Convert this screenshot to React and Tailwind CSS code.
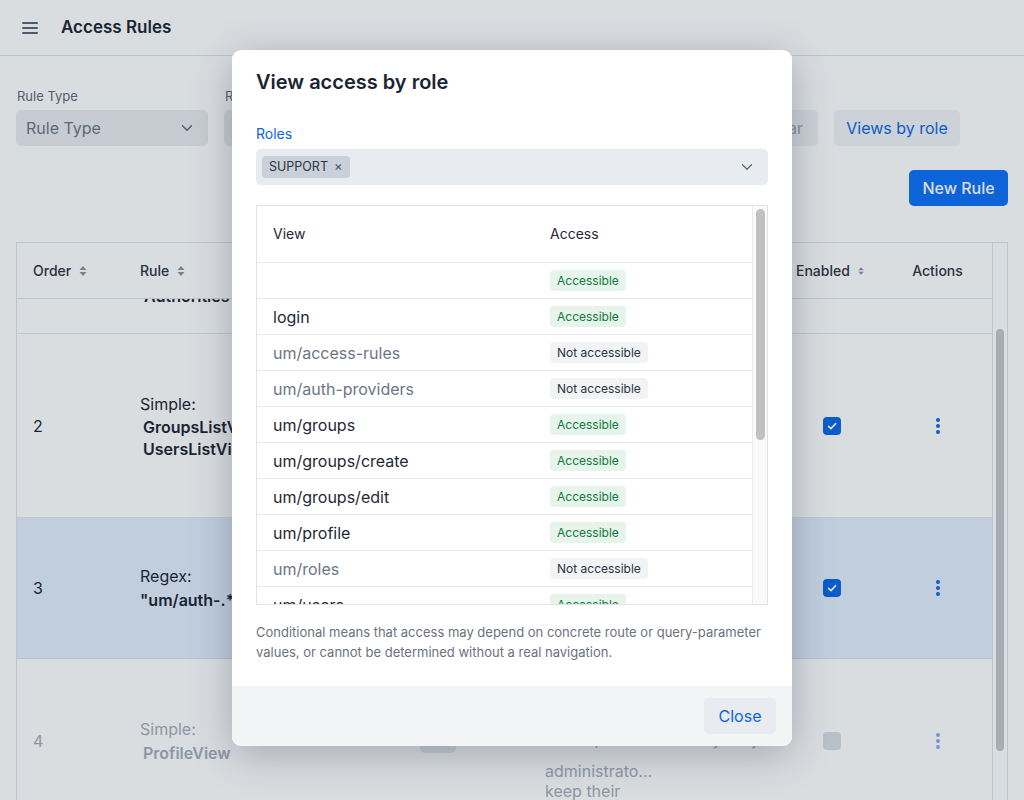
import { ChevronDown } from "lucide-react";

const views = [
  { path: "", ok: true },
  { path: "login", ok: true },
  { path: "um/access-rules", ok: false },
  { path: "um/auth-providers", ok: false },
  { path: "um/groups", ok: true },
  { path: "um/groups/create", ok: true },
  { path: "um/groups/edit", ok: true },
  { path: "um/profile", ok: true },
  { path: "um/roles", ok: false },
  { path: "um/users", ok: true },
  { path: "um/users/create", ok: true },
];

function SortIcon() {
  return (
    <svg width="8" height="12" viewBox="0 0 8 12" className="ml-2 text-[#8a94a4]">
      <path d="M4 1 L7.5 5 H0.5 Z" fill="currentColor" />
      <path d="M4 11 L7.5 7 H0.5 Z" fill="currentColor" />
    </svg>
  );
}

function Kebab({ faded }) {
  return (
    <div className={faded ? "flex flex-col gap-[2px] text-[#86acef]" : "flex flex-col gap-[2px] text-[#0c66e4]"}>
      <span className="w-1 h-1 rounded-full bg-current" />
      <span className="w-1 h-1 rounded-full bg-current" />
      <span className="w-1 h-1 rounded-full bg-current" />
    </div>
  );
}

function Check({ on }) {
  if (!on) return <div className="w-[18px] h-[18px] rounded-[4px] bg-[#d9dde4]" />;
  return (
    <div className="w-[18px] h-[18px] rounded-[4px] bg-[#0c66e4] flex items-center justify-center">
      <svg width="12" height="12" viewBox="0 0 12 12">
        <path d="M2.5 6.3 L5 8.6 L9.6 3.6" stroke="white" strokeWidth="1.6" fill="none" strokeLinecap="round" strokeLinejoin="round" />
      </svg>
    </div>
  );
}

function Badge({ ok }) {
  return ok ? (
    <span className="inline-flex h-[21px] items-center px-[7px] rounded-[4px] bg-[#e6f4eb] text-[#117a3c] text-xs">Accessible</span>
  ) : (
    <span className="inline-flex h-[21px] items-center px-[7px] rounded-[4px] bg-[#f1f3f5] text-[#2a3442] text-xs">Not accessible</span>
  );
}

function BackgroundPage() {
  return (
    <div className="h-[800px] bg-white flex flex-col">
      <header className="h-14 shrink-0 flex items-center border-b border-[#dfe3ea]">
        <div className="ml-[22px] flex flex-col gap-[3px]">
          <span className="block w-4 h-[2px] bg-[#5a6473] rounded" />
          <span className="block w-4 h-[2px] bg-[#5a6473] rounded" />
          <span className="block w-4 h-[2px] bg-[#5a6473] rounded" />
        </div>
        <h1 className="ml-[23px] text-[17px] font-semibold text-[#1a2433]">Access Rules</h1>
      </header>

      <div className="px-4 pt-[31px] shrink-0 flex items-end gap-4">
        <div className="flex flex-col w-[192px]">
          <label className="text-[13px] leading-[18px] text-[#5d6878] pl-[1px] mb-[5px]">Rule Type</label>
          <div className="h-9 rounded-[5px] bg-[#e8ebef] flex items-center justify-between pl-[10px] pr-[12px]">
            <span className="text-base text-[#6b7585]">Rule Type</span>
            <ChevronDown size={18} strokeWidth={1.8} className="text-[#5a6473]" />
          </div>
        </div>
        <div className="flex flex-col w-[192px]">
          <label className="text-[13px] leading-[18px] text-[#5d6878] pl-[1px] mb-[5px]">Roles</label>
          <div className="h-9 rounded-[5px] bg-[#e8ebef] flex items-center justify-between pl-[10px] pr-[12px]">
            <span className="text-base text-[#6b7585]">Roles</span>
            <ChevronDown size={18} strokeWidth={1.8} className="text-[#5a6473]" />
          </div>
        </div>
        <div className="flex flex-col w-[300px]">
          <label className="text-[13px] leading-[18px] text-[#5d6878] pl-[1px] mb-[5px]">Search</label>
          <div className="h-9 rounded-[5px] bg-[#e8ebef]" />
        </div>
        <button className="h-9 w-[70px] rounded-[5px] bg-[#f0f2f6] text-base text-[#a0a8b4]">Clear</button>
        <button className="h-9 w-[126px] rounded-[5px] bg-[#f0f2f6] text-base text-[#0c66e4]">Views by role</button>
      </div>

      <div className="px-4 pt-6 shrink-0 flex justify-end">
        <button className="h-9 w-[99px] rounded-[5px] bg-[#0b6ef6] text-base font-medium text-white">New Rule</button>
      </div>

      <div className="mx-4 mt-9 flex-1 min-h-0 border border-b-0 border-[#dee2ea] flex overflow-hidden">
        <div className="flex-1 flex flex-col overflow-hidden">
          <div className="h-14 shrink-0 flex items-center border-b border-[#dee2ea] text-sm font-medium text-[#2a3442]">
            <div className="w-[107px] px-4 flex items-center">Order<SortIcon /></div>
            <div className="w-[280px] px-4 flex items-center">Rule<SortIcon /></div>
            <div className="w-[125px] px-4 flex items-center">Roles</div>
            <div className="w-[251px] px-4 flex items-center">Description</div>
            <div className="w-[100px] px-4 flex items-center">Enabled<SortIcon /></div>
            <div className="w-[112px] pl-[3px] flex justify-center">Actions</div>
          </div>

          <div className="h-[35px] shrink-0 overflow-hidden flex items-start border-b border-[#e1e6ee]">
            <div className="w-[107px]" />
            <div className="w-[280px] px-4 -mt-[15px] text-base font-semibold leading-6 text-[#1a2433]">&nbsp;Authorities</div>
          </div>

          <div className="h-[184px] shrink-0 flex items-center border-b border-[#e1e6ee] text-base text-[#1a2433]">
            <div className="w-[107px] px-4">2</div>
            <div className="w-[280px] px-4 flex flex-col">
              <span className="leading-6">Simple:</span>
              <span className="font-semibold leading-[22px] pl-[3px]">GroupsListView,</span>
              <span className="font-semibold leading-[22px] pl-[3px]">UsersListView</span>
            </div>
            <div className="w-[125px]" />
            <div className="w-[251px]" />
            <div className="w-[100px] pl-[4px] flex justify-center"><Check on /></div>
            <div className="w-[112px] pl-[3px] flex justify-center"><Kebab /></div>
          </div>

          <div className="h-[141px] shrink-0 flex items-center border-b border-[#d3deec] bg-[#e2eefd] text-base text-[#1a2433]">
            <div className="w-[107px] px-4">3</div>
            <div className="w-[280px] px-4 flex flex-col">
              <span className="leading-6">Regex:</span>
              <span className="font-semibold leading-6">"um/auth-.*"</span>
            </div>
            <div className="w-[125px]" />
            <div className="w-[251px]" />
            <div className="w-[100px] pl-[4px] flex justify-center"><Check on /></div>
            <div className="w-[112px] pl-[3px] flex justify-center"><Kebab /></div>
          </div>

          <div className="h-[164px] shrink-0 flex items-center text-base text-[#a3acb9]">
            <div className="w-[107px] px-4">4</div>
            <div className="w-[280px] px-4 flex flex-col">
              <span className="leading-6">Simple:</span>
              <span className="font-semibold leading-6 pl-[3px]">ProfileView</span>
            </div>
            <div className="w-[125px] px-4"><div className="w-9 h-6 rounded-[5px] bg-[#e8ebef]" /></div>
            <div className="w-[251px] px-4 self-start pt-[10px] flex flex-col leading-5">
              <span>Every user may open</span>
              <span>their own profile page</span>
              <span>and update personal</span>
              <span className="mb-3">details, shared to everybody</span>
              <span>administrato...</span>
              <span>keep their</span>
            </div>
            <div className="w-[100px] pl-[4px] flex justify-center"><Check /></div>
            <div className="w-[112px] pl-[3px] flex justify-center"><Kebab faded /></div>
          </div>
        </div>
        <div className="w-[15px] shrink-0 border-l border-[#dee2ea] flex justify-center pt-[86px]">
          <div className="w-[8px] h-[422px] rounded-full bg-[#c3c6ca]" />
        </div>
      </div>
    </div>
  );
}

function Modal() {
  return (
    <div className="w-[560px] h-[696px] bg-white rounded-[9px] shadow-[0_8px_40px_rgba(20,30,50,0.28)] flex flex-col overflow-hidden">
      <div className="px-6 pt-[18px] flex-1 flex flex-col">
        <h2 className="text-[20px] leading-7 font-semibold text-[#1a2433]">View access by role</h2>
        <label className="mt-7 text-sm leading-5 text-[#0c66e4]">Roles</label>
        <div className="mt-[5px] h-9 rounded-[5px] bg-[#e8ebef] flex items-center justify-between pl-[6px] pr-[12px]">
          <span className="h-[22px] inline-flex items-center gap-[6px] rounded-[4px] bg-[#c9d0d9] pl-[7px] pr-[7px] text-[12.5px] text-[#2a3442]">
            SUPPORT<span className="text-[13px] text-[#4b5563]">×</span>
          </span>
          <ChevronDown size={18} strokeWidth={1.6} className="text-[#5a6473]" />
        </div>

        <div className="mt-5 h-[400px] shrink-0 border border-[#e2e2e2] flex overflow-hidden">
          <div className="flex-1 flex flex-col overflow-hidden">
            <div className="h-14 shrink-0 flex items-center text-sm text-[#1f2937]">
              <div className="w-[277px] px-4">View</div>
              <div className="px-4">Access</div>
            </div>
            {views.map((v) => (
              <div key={v.path} className="h-9 shrink-0 flex items-center border-t border-[#ebebeb]">
                <div className={v.ok ? "w-[277px] px-4 text-base text-[#1f2937]" : "w-[277px] px-4 text-base text-[#6b7585]"}>{v.path}</div>
                <div className="px-4 flex"><Badge ok={v.ok} /></div>
              </div>
            ))}
          </div>
          <div className="w-[15px] shrink-0 bg-[#fafafa] border-l border-[#ececec] flex justify-center pt-[3px]">
            <div className="w-[9px] h-[231px] rounded-full bg-[#c1c1c1]" />
          </div>
        </div>

        <p className="mt-[17px] text-[13px] leading-5 text-[#6b7280]">
          Conditional means that access may depend on concrete route or query-parameter values, or cannot be determined without a real navigation.
        </p>
      </div>
      <div className="h-[60px] shrink-0 bg-[#f3f4f6] flex items-center justify-end pr-4">
        <button className="h-9 w-[72px] rounded-[5px] bg-[#e8ebef] text-base text-[#0c66e4]">Close</button>
      </div>
    </div>
  );
}

export default function App() {
  return (
    <div className="relative h-[800px] overflow-hidden font-['Inter','Noto_Sans',sans-serif]">
      <BackgroundPage />
      <div className="absolute inset-0 bg-[rgba(26,42,64,0.16)] flex justify-center items-start pt-[50px]">
        <Modal />
      </div>
    </div>
  );
}
